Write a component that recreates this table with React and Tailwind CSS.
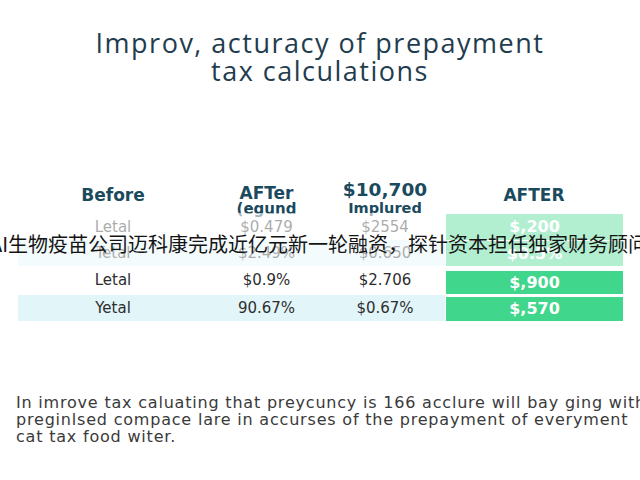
import React from 'react';

const rows = [
  { label: 'Letal', a: '$0.479', b: '$2554', c: '$,200', blue: false, h: 'h-[26px]', g: 'h-[26px]' },
  { label: 'Tetal', a: '$2.49%', b: '$0.650', c: '$0.5%', blue: true, h: 'h-[26px]', g: 'h-[25px] mt-[1px]' },
  { label: 'Letal', a: '$0.9%', b: '$2.706', c: '$,900', blue: false, h: 'h-[29px]', g: 'h-[23px] mt-[5px]' },
  { label: 'Yetal', a: '90.67%', b: '$0.67%', c: '$,570', blue: true, h: 'h-[26px]', g: 'h-[24px] mt-[2px]' },
];

export default function App() {
  return (
    <div className="relative w-[640px] h-[480px] overflow-hidden bg-white font-['Open_Sans',sans-serif]">
      {/* title */}
      <div className="pt-[29px] text-center text-[27px] leading-[28px] text-[#1f3d4e] tracking-[1.5px]">
        <div>Improv, acturacy of prepayment</div>
        <div>tax calculations</div>
      </div>

      {/* table */}
      <div className="mt-[95px] ml-[18px] w-[605px] font-['DejaVu_Sans',sans-serif]">
        <div className="grid grid-cols-[190px_117px_120px_178px] h-[34px] font-bold text-[#1b4a5e] text-center">
          <div className="flex justify-center text-[17px] leading-none pt-[7px]">Before</div>
          <div className="flex flex-col items-center leading-none pt-[5px]">
            <span className="text-[17px]">AFTer</span>
            <span className="text-[15px]">(egund</span>
          </div>
          <div className="flex flex-col items-center leading-none pt-[1px]">
            <span className="text-[18.5px]">$10,700</span>
            <span className="text-[14.5px] mt-[1px]">Implured</span>
          </div>
          <div className="flex justify-center text-[17px] leading-none pt-[7px]">AFTER</div>
        </div>

        {rows.map((r, i) => (
          <div key={i} className={`grid grid-cols-[190px_117px_120px_178px] ${r.h} text-[15px] text-[#2e2e2e]`}>
            <div className={`col-span-3 grid grid-cols-[190px_117px_120px] items-center text-center ${r.blue ? 'bg-[#e2f5f9]' : ''}`}>
              <span>{r.label}</span>
              <span>{r.a}</span>
              <span>{r.b}</span>
            </div>
            <div className="pl-[1px]">
              <div className={`${r.g} bg-[#40d68b] flex items-center justify-center text-white font-bold text-[16px]`}>
                {r.c}
              </div>
            </div>
          </div>
        ))}
      </div>

      {/* paragraph */}
      <div className="mt-[73px] pl-[16px] text-[16px] leading-[17px] tracking-[0.8px] text-[#3a3a3a] font-['DejaVu_Sans',sans-serif] whitespace-nowrap">
        <div>In imrove tax caluating that preycuncy is 166 acclure will bay ging with it</div>
        <div>preginlsed compace lare in accurses of the prepayment of everyment</div>
        <div>cat tax food witer.</div>
      </div>

      {/* subtitle overlay */}
      <div className="absolute left-0 top-[213px] w-[640px] h-[54px] bg-white/60 flex items-center">
        <div className="ml-[-10px] mt-[8px] whitespace-nowrap text-[20px] leading-none text-[#141414] font-['Noto_Sans_CJK_SC',sans-serif]">
          AI生物疫苗公司迈科康完成近亿元新一轮融资，探针资本担任独家财务顾问
        </div>
      </div>
    </div>
  );
}
